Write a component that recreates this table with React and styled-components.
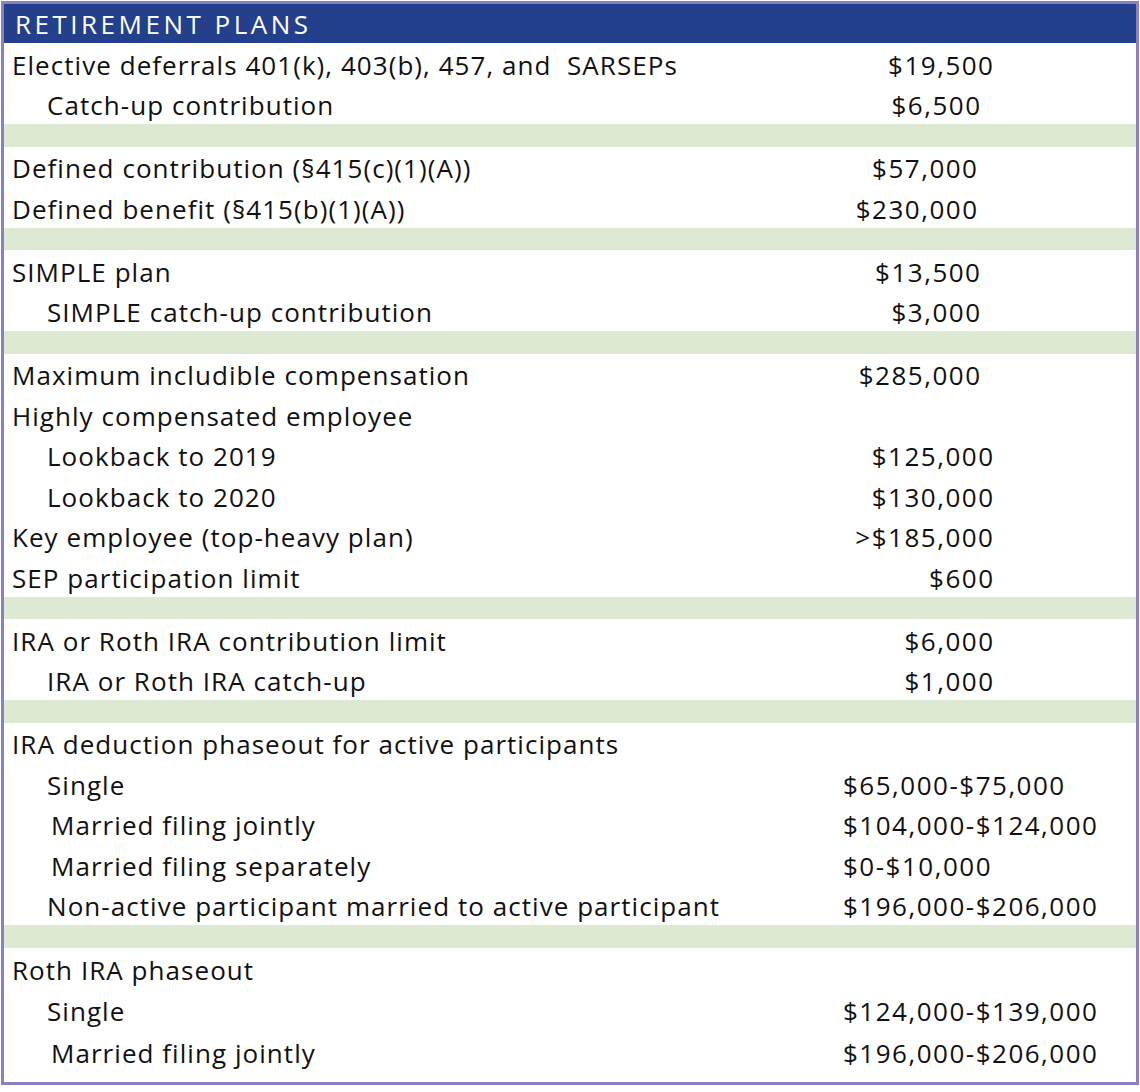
import React from "react";
import styled, { createGlobalStyle } from "styled-components";

const Global = createGlobalStyle`
  html, body { margin: 0; padding: 0; background: #ffffff; }
  body { font-family: "Open Sans", "Noto Sans", sans-serif; color: #111111; }
`;

const Frame = styled.div`
  margin: 1px 0 0 1px;
  width: 1138px;
  box-sizing: border-box;
  border: 3px solid #8a80c2;
  background: #ffffff;
  padding-bottom: ${(p) => p.$tail}px;
`;

const Header = styled.div`
  height: 39px;
  background: #243f8b;
  color: #ffffff;
  display: flex;
  align-items: center;
  padding-left: 11px;
  padding-top: 1px;
  box-sizing: border-box;
  font-size: 26px;
  letter-spacing: 3.5px;
`;

const Band = styled.div`
  height: 22.5px;
  background: #dee9d3;
`;

const Row = styled.div`
  display: grid;
  grid-template-columns: 1fr 293px;
  align-items: center;
  box-sizing: border-box;
  padding-top: 3px;
  height: ${(p) => p.$h || 40.5}px;
  font-size: 26px;
  line-height: 1;
  white-space: nowrap;
`;

const Label = styled.div`
  padding-left: ${(p) => p.$indent}px;
  letter-spacing: 1.05px;
`;

const Value = styled.div`
  letter-spacing: 1.5px;
  text-align: ${(p) => (p.$range ? "left" : "right")};
  padding-right: ${(p) => (p.$range ? 0 : 1136 - p.$end - 1.5)}px;
`;

const sections = [
  [
    ["Elective deferrals 401(k), 403(b), 457, and\u00a0 SARSEPs", 8, "$19,500", 993],
    ["Catch-up contribution", 43, "$6,500", 980],
  ],
  [
    ["Defined contribution (§415(c)(1)(A))", 8, "$57,000", 977],
    ["Defined benefit (§415(b)(1)(A))", 8, "$230,000", 977],
  ],
  [
    ["SIMPLE plan", 8, "$13,500", 980],
    ["SIMPLE catch-up contribution", 43, "$3,000", 980],
  ],
  [
    ["Maximum includible compensation", 8, "$285,000", 980],
    ["Highly compensated employee", 8, "", 0],
    ["Lookback to 2019", 43, "$125,000", 993],
    ["Lookback to 2020", 43, "$130,000", 993],
    ["Key employee (top-heavy plan)", 8, ">$185,000", 993],
    ["SEP participation limit", 8, "$600", 993],
  ],
  [
    ["IRA or Roth IRA contribution limit", 8, "$6,000", 993],
    ["IRA or Roth IRA catch-up", 43, "$1,000", 993],
  ],
  [
    ["IRA deduction phaseout for active participants", 8, "", 0],
    ["Single", 43, "$65,000-$75,000", "range"],
    ["Married filing jointly", 47, "$104,000-$124,000", "range"],
    ["Married filing separately", 47, "$0-$10,000", "range"],
    ["Non-active participant married to active participant", 43, "$196,000-$206,000", "range"],
  ],
  [
    ["Roth IRA phaseout", 8, "", 0],
    ["Single", 43, "$124,000-$139,000", "range"],
    ["Married filing jointly", 47, "$196,000-$206,000", "range"],
  ],
];

export default function App() {
  return (
    <>
      <Global />
      <Frame $tail={9.5}>
        <Header>RETIREMENT PLANS</Header>
        {sections.map((rows, si) => (
          <React.Fragment key={si}>
            {si > 0 && <Band />}
            {rows.map(([label, indent, value, end], ri) => (
              <Row key={ri} $h={si === sections.length - 1 ? 41.5 : 40.5}>
                <Label $indent={indent}>{label}</Label>
                <Value $range={end === "range"} $end={end === "range" ? 0 : end}>
                  {value}
                </Value>
              </Row>
            ))}
          </React.Fragment>
        ))}
      </Frame>
    </>
  );
}
